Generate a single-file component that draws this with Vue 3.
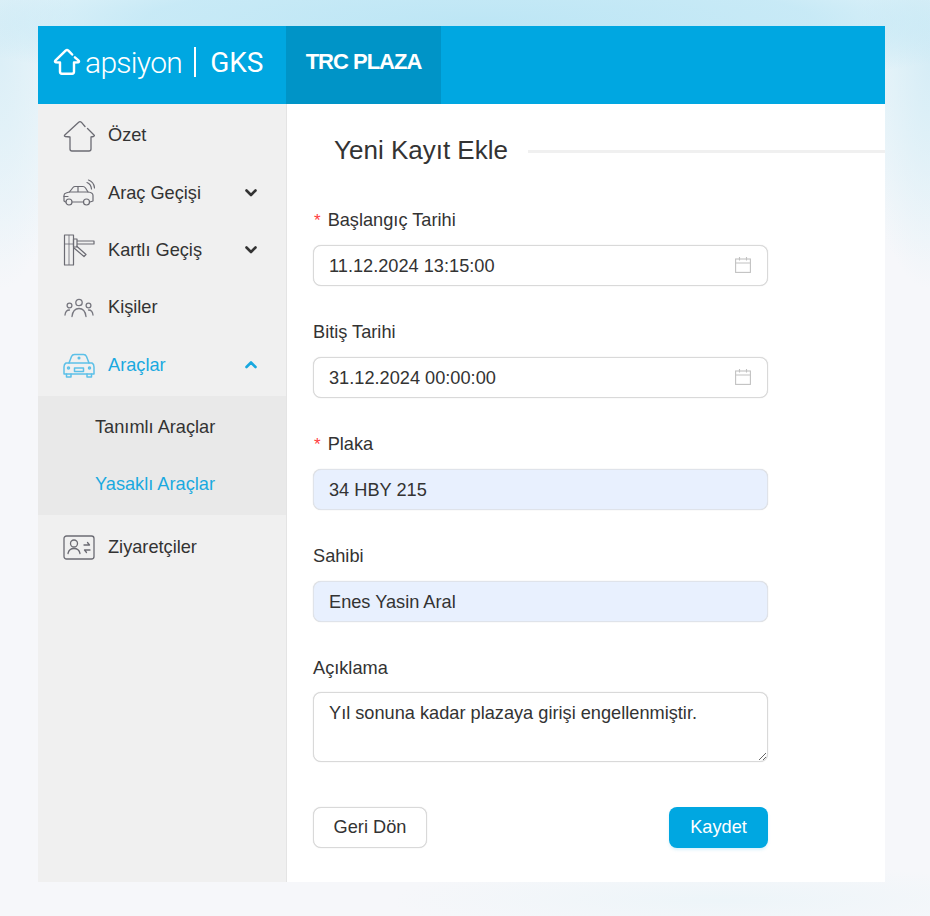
<template>
  <div class="page">
    <div class="frame">
      <header class="topbar">
        <div class="brand">
          <svg class="brand-icon" viewBox="0 0 30 30" fill="none" stroke="#fff" stroke-width="2.6" stroke-linejoin="round" stroke-linecap="round">
            <path d="M20.5 7 L16.5 2.8 Q15 1.6 13.5 2.8 L2.5 13.5 Q1.6 15 3 15.2 L7.5 15.5 L7.5 25.5 Q7.5 27.5 9.5 27.5 L20.5 27.5 Q22.5 27.5 22.5 25.5 L22.5 15.5 L27 15.2 Q28.4 15 27.5 13.5 L23.5 10" />
          </svg>
          <span class="brand-name">apsiyon</span>
          <span class="brand-sep"></span>
          <span class="brand-app">GKS</span>
        </div>
        <div class="site-tab">TRC PLAZA</div>
      </header>

      <div class="body">
        <aside class="sidebar">
          <nav class="menu">
            <a class="menu-row">
              <span class="menu-icon">
                <svg width="32" height="32" viewBox="0 0 32 32" fill="none" stroke="#6b6b73" stroke-width="1.3" stroke-linejoin="round" stroke-linecap="round">
                  <path d="M22 6.5 L18.3 2.2 Q17 1 15.7 2.2 L1.8 15 Q0.8 16.3 2.3 16.5 L7 17 L7 29 Q7 31 9 31 L26 31 Q28 31 28 29 L28 17 L30.5 16.5 Q32 16 31 15 L24.5 8.5" />
                </svg>
              </span>
              <span class="menu-label">Özet</span>
            </a>
            <a class="menu-row">
              <span class="menu-icon">
                <svg width="32" height="28" viewBox="0 0 32 28" fill="none" stroke="#6b6b73" stroke-width="1.2" stroke-linecap="round" stroke-linejoin="round">
                  <path d="M2.5 23 L1 22 L1 16.5 Q1 14.5 3 14 L6.5 13 L10 8.5 Q10.8 7.5 12 7.5 L20 7.5 Q21.5 7.5 22.5 9 L25 13 Q30 13.5 30 16.5 L30 22 L27 23" />
                  <path d="M9.5 23 L20 23" />
                  <circle cx="6" cy="23" r="3" />
                  <circle cx="23.5" cy="23" r="3" />
                  <path d="M6.5 13 L25 13 M15 7.5 L15 13 M1 17.5 L5 17.5" />
                  <path d="M24 3.5 Q28 5 28.5 10 M25.5 1 Q31 3 31.5 9" />
                </svg>
              </span>
              <span class="menu-label">Araç Geçişi</span>
              <svg class="chev" width="12" height="8" viewBox="0 0 12 8" fill="none" stroke="#333" stroke-width="2.6" stroke-linecap="round" stroke-linejoin="round">
                <path d="M1.5 1.5 L6 6 L10.5 1.5" />
              </svg>
            </a>
            <a class="menu-row">
              <span class="menu-icon">
                <svg width="32" height="32" viewBox="0 0 32 32" fill="none" stroke="#6b6b73" stroke-width="1.2" stroke-linejoin="round">
                  <rect x="1.5" y="1" width="9" height="30" />
                  <path d="M1.5 10 L10.5 10 M6 1 L6 31" stroke-width="0.8" />
                  <rect x="10.5" y="5" width="3.5" height="8" />
                  <path d="M14 7 L31 7 L31 10 L14 10" />
                  <path d="M13.5 12 L23 20.5 L21 22.5 L11 14" />
                </svg>
              </span>
              <span class="menu-label">Kartlı Geçiş</span>
              <svg class="chev" width="12" height="8" viewBox="0 0 12 8" fill="none" stroke="#333" stroke-width="2.6" stroke-linecap="round" stroke-linejoin="round">
                <path d="M1.5 1.5 L6 6 L10.5 1.5" />
              </svg>
            </a>
            <a class="menu-row">
              <span class="menu-icon">
                <svg width="30" height="20" viewBox="0 0 30 20" fill="none" stroke="#77777f" stroke-width="1.3" stroke-linecap="round">
                  <circle cx="15" cy="4.5" r="3.2" />
                  <circle cx="5.5" cy="7.5" r="2.4" />
                  <circle cx="24.5" cy="7.5" r="2.4" />
                  <path d="M8 18.5 Q9 10.5 15 10.5 Q21 10.5 22 18.5" />
                  <path d="M1 17 Q1.5 12 5.5 12 M29 17 Q28.5 12 24.5 12" />
                </svg>
              </span>
              <span class="menu-label">Kişiler</span>
            </a>
            <a class="menu-row active">
              <span class="menu-icon">
                <svg width="32" height="25" viewBox="0 0 32 25" fill="none" stroke="#5cc0e8" stroke-width="1.5" stroke-linejoin="round" stroke-linecap="round">
                  <path d="M6 10 L8.5 3.5 Q9.3 1.5 11.5 1.5 L20.5 1.5 Q22.7 1.5 23.5 3.5 L26 10" />
                  <path d="M6 10 L3 10 Q1 11 1 14 L1 21 L31 21 L31 14 Q31 11 29 10 L6 10" />
                  <path d="M3.5 21 L3.5 24 L8 24 L8 21 M24 21 L24 24 L28.5 24 L28.5 21" />
                  <rect x="11.5" y="15" width="9" height="3.5" />
                  <circle cx="5.5" cy="15" r="1" />
                  <circle cx="26.5" cy="15" r="1" />
                  <circle cx="16" cy="5" r="0.8" />
                </svg>
              </span>
              <span class="menu-label">Araçlar</span>
              <svg class="chev" width="12" height="8" viewBox="0 0 12 8" fill="none" stroke="#18a8df" stroke-width="2.6" stroke-linecap="round" stroke-linejoin="round">
                <path d="M1.5 6 L6 1.5 L10.5 6" />
              </svg>
            </a>
            <div class="submenu">
              <a class="sub-row">Tanımlı Araçlar</a>
              <a class="sub-row active">Yasaklı Araçlar</a>
            </div>
            <a class="menu-row">
              <span class="menu-icon">
                <svg width="32" height="25" viewBox="0 0 32 25" fill="none" stroke="#6b6b73" stroke-width="1.3" stroke-linecap="round" stroke-linejoin="round">
                  <rect x="1" y="1" width="30" height="23" rx="2.5" />
                  <circle cx="11" cy="8.5" r="3.5" />
                  <path d="M5 18.5 Q6 13.5 11 13.5 Q16 13.5 17 18.5" />
                  <path d="M21 10 L26.5 10 M24.5 7.5 L26.5 10" />
                  <path d="M27 15 L21.5 15 M23.5 17.5 L21.5 15" />
                </svg>
              </span>
              <span class="menu-label">Ziyaretçiler</span>
            </a>
          </nav>
        </aside>

        <main class="content">
          <div class="section-title">
            <h2>Yeni Kayıt Ekle</h2>
            <span class="title-line"></span>
          </div>

          <form class="form" @submit.prevent>
            <div v-for="f in fields" :key="f.label" class="form-item">
              <label class="field-label" :class="{ required: f.required }">{{ f.label }}</label>
              <div class="input-wrap">
                <input class="input" :class="{ filled: f.filled }" type="text" :value="f.value" readonly />
                <svg v-if="f.date" class="cal" width="16" height="16" viewBox="0 0 16 16" fill="none" stroke="#c2c2c2" stroke-width="1.1">
                  <rect x="0.6" y="2" width="14.8" height="13.4" />
                  <path d="M0.6 6 L15.4 6 M4.5 0 L4.5 3.5 M11.5 0 L11.5 3.5" />
                </svg>
              </div>
            </div>

            <div class="form-item">
              <label class="field-label">Açıklama</label>
              <textarea class="textarea" readonly>Yıl sonuna kadar plazaya girişi engellenmiştir.</textarea>
            </div>

            <div class="actions">
              <button type="button" class="btn btn-back">Geri Dön</button>
              <button type="submit" class="btn btn-save">Kaydet</button>
            </div>
          </form>
        </main>
      </div>
    </div>
  </div>
</template>

<script setup>
const fields = [
  { label: 'Başlangıç Tarihi', value: '11.12.2024 13:15:00', required: true, date: true },
  { label: 'Bitiş Tarihi', value: '31.12.2024 00:00:00', date: true },
  { label: 'Plaka', value: '34 HBY 215', required: true, filled: true },
  { label: 'Sahibi', value: 'Enes Yasin Aral', filled: true }
]
</script>

<style>
html,
body {
  margin: 0;
  background: #f6f7fa;
}
</style>

<style scoped>
.page {
  height: 916px;
  box-sizing: border-box;
  padding: 26px 45px 34px 38px;
  overflow: hidden;
  font-family: "Liberation Sans", Arial, sans-serif;
  color: #333;
  background:
    radial-gradient(ellipse 560px 70px at 480px 22px, #bde6f5 0%, rgba(189, 230, 245, 0.75) 60%, rgba(189, 230, 245, 0) 100%),
    radial-gradient(ellipse 70px 230px at 0 60px, #dceff7 0%, rgba(220, 239, 247, 0) 100%),
    radial-gradient(ellipse 70px 230px at 930px 60px, #d6edf6 0%, rgba(214, 237, 246, 0) 100%),
    radial-gradient(ellipse 330px 36px at 720px 900px, #edf5f9 0%, rgba(237, 245, 249, 0) 100%),
    linear-gradient(#e8f5fa 0, #f6f7fa 260px);
}

.frame {
  height: 856px;
  display: flex;
  flex-direction: column;
  background: #fff;
}

.topbar {
  height: 78px;
  flex: none;
  display: flex;
  background: #00a7e1;
  color: #fff;
}

.brand {
  width: 248px;
  display: flex;
  align-items: center;
  padding: 0 0 6px 15px;
  box-sizing: border-box;
}

.brand-icon {
  width: 28px;
  height: 28px;
  margin-right: 4px;
}

.brand-name {
  font-family: Roboto, "Liberation Sans", sans-serif;
  font-weight: 300;
  font-size: 30px;
  letter-spacing: -0.7px;
}

.brand-sep {
  width: 2px;
  height: 30px;
  background: #fff;
  margin: 0 14px 0 12px;
}

.brand-app {
  font-family: Roboto, "Liberation Sans", sans-serif;
  font-size: 28px;
}

.site-tab {
  width: 155px;
  display: flex;
  align-items: center;
  justify-content: center;
  padding-bottom: 6px;
  box-sizing: border-box;
  background: #0094c7;
  font-size: 22px;
  font-weight: 700;
  letter-spacing: -1px;
}

.body {
  flex: 1;
  display: flex;
  min-height: 0;
}

.sidebar {
  width: 249px;
  flex: none;
  box-sizing: border-box;
  background: #f0f0f0;
  border-right: 1px solid #e4e4e4;
  padding-top: 3px;
}

.menu-row {
  height: 57.4px;
  display: flex;
  align-items: center;
  padding-left: 25px;
  padding-right: 29px;
  font-size: 18.2px;
  color: #333;
}

.menu-row.active {
  color: #1aa9e0;
}

.menu-icon {
  width: 32px;
  display: flex;
  justify-content: center;
  margin-right: 13px;
}

.menu-label {
  flex: 1;
}

.chev {
  flex: none;
}

.submenu {
  background: #e9e9e9;
  margin: 2px 0 4px;
  padding: 3px 0 2px;
}

.sub-row {
  height: 57px;
  display: flex;
  align-items: center;
  padding-left: 57px;
  font-size: 18.2px;
  color: #333;
}

.sub-row.active {
  color: #1aa9e0;
}

.content {
  flex: 1;
  min-width: 0;
  padding: 31px 0 0 26px;
}

.section-title {
  display: flex;
  align-items: center;
  height: 30px;
  margin-bottom: 43px;
}

.section-title h2 {
  margin: 0 20px 0 21px;
  font-size: 26px;
  font-weight: 400;
  color: #333;
  white-space: nowrap;
}

.title-line {
  flex: 1;
  height: 3px;
  background: #f0f0f0;
  margin-top: 2px;
}

.form {
  width: 455px;
}

.form-item {
  margin-bottom: 34px;
}

.field-label {
  display: block;
  height: 25px;
  line-height: 25px;
  margin-bottom: 12px;
  font-size: 18.2px;
  color: #333;
}

.field-label.required::before {
  content: "*";
  color: #ff3b3f;
  margin: 0 7px 0 1px;
  font-size: 17px;
}

.input-wrap {
  position: relative;
}

.input,
.textarea {
  display: block;
  width: 100%;
  box-sizing: border-box;
  border: 1px solid #d9d9d9;
  border-radius: 8px;
  background: #fff;
  box-shadow: 0 0 1px rgba(0, 0, 0, 0.2);
  font-family: inherit;
  font-size: 18.2px;
  color: #333;
  outline: none;
}

.input {
  height: 41px;
  padding: 1px 15px 0;
}

.input.filled {
  background: #e8f0fe;
  border-color: #dfe3ea;
}

.textarea {
  height: 70px;
  padding: 8px 15px;
  line-height: 24px;
}

.form-item:has(.textarea) {
  margin-bottom: 45px;
}

.form-item:has(.textarea) .field-label {
  margin-bottom: 11px;
}

.cal {
  position: absolute;
  right: 17px;
  top: 12px;
}

.actions {
  display: flex;
  justify-content: space-between;
}

.btn {
  height: 41px;
  border-radius: 8px;
  font-family: inherit;
  font-size: 18.2px;
}

.btn-back {
  width: 114px;
  background: #fff;
  border: 1px solid #d9d9d9;
  box-shadow: 0 0 1px rgba(0, 0, 0, 0.2);
  color: #333;
}

.btn-save {
  width: 99px;
  background: #00a7e1;
  border: none;
  color: #fff;
  box-shadow: 0 2px 3px rgba(0, 167, 225, 0.15);
}
</style>
